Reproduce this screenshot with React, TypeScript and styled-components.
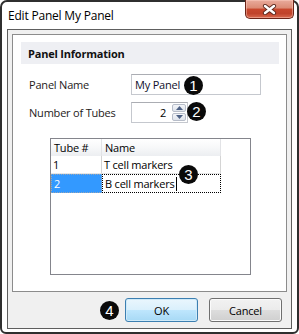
import React from "react";
import styled, { createGlobalStyle } from "styled-components";

const GlobalStyle = createGlobalStyle`
  html, body {
    margin: 0;
    padding: 0;
    background: #ffffff;
  }
  * {
    box-sizing: border-box;
  }
`;

const uiFont = `"Segoe UI", "Open Sans", "Noto Sans", sans-serif`;

const App: React.FC = () => {
  return (
    <>
      <GlobalStyle />
      <Window>
        <TitleBar>Edit Panel My Panel</TitleBar>
        <CloseButton aria-label="Close">
          <svg width="15" height="11" viewBox="0 0 15 11">
            <path d="M3 2 L12 9 M12 2 L3 9" stroke="#5b2a20" strokeWidth="4.2" strokeLinecap="round" />
            <path d="M3 2 L12 9 M12 2 L3 9" stroke="#ffffff" strokeWidth="2.4" strokeLinecap="round" />
          </svg>
        </CloseButton>

        <Client>
          <Panel>
            <SectionHeader>Panel Information</SectionHeader>

            <Form>
              <FieldRow>
                <Label>Panel Name</Label>
                <FieldHolder>
                  <TextInput>My Panel</TextInput>
                  <Badge $left={53} $top={2}>1</Badge>
                </FieldHolder>
              </FieldRow>

              <FieldRow>
                <Label>Number of Tubes</Label>
                <FieldHolder>
                  <Spinner>
                    <SpinValue>2</SpinValue>
                    <SpinButtons>
                      <SpinButton>
                        <svg width="7" height="4" viewBox="0 0 7 4">
                          <path d="M0 4 L3.5 0 L7 4 Z" fill="#4d6185" />
                        </svg>
                      </SpinButton>
                      <SpinButton>
                        <svg width="7" height="4" viewBox="0 0 7 4">
                          <path d="M0 0 L3.5 4 L7 0 Z" fill="#4d6185" />
                        </svg>
                      </SpinButton>
                    </SpinButtons>
                  </Spinner>
                  <Badge $left={56} $top={0}>2</Badge>
                </FieldHolder>
              </FieldRow>
            </Form>

            <Grid>
              <GridRow>
                <HeaderCell $width={50}>Tube #</HeaderCell>
                <HeaderCell $width={118}>Name</HeaderCell>
              </GridRow>
              <GridRow>
                <Cell $width={50}>1</Cell>
                <Cell $width={118}>T cell markers</Cell>
              </GridRow>
              <GridRow>
                <SelectedCell $width={50}>2</SelectedCell>
                <EditCell $width={118}>
                  B cell markers<Caret />
                </EditCell>
              </GridRow>
              <Badge $left={128} $top={26}>3</Badge>
            </Grid>
          </Panel>

          <ButtonRow>
            <InlineBadge>4</InlineBadge>
            <DialogButton $primary>OK</DialogButton>
            <DialogButton>Cancel</DialogButton>
          </ButtonRow>
        </Client>
      </Window>
    </>
  );
};

export default App;

const Window = styled.div`
  position: relative;
  width: 299px;
  height: 334px;
  border: 2px solid #2f2f2f;
  border-radius: 7px 7px 6px 6px;
  background: #ffffff;
  display: flex;
  flex-direction: column;
  font-family: ${uiFont};
  font-size: 11px;
  letter-spacing: -0.2px;
  color: #1a1a1a;
`;

const TitleBar = styled.div`
  height: 27px;
  padding-left: 6px;
  display: flex;
  align-items: center;
  font-size: 12px;
  color: #000000;
`;

const CloseButton = styled.div`
  position: absolute;
  top: -2px;
  right: 3px;
  width: 49px;
  height: 19px;
  border: 1px solid #6b2418;
  border-top: none;
  border-radius: 0 0 5px 5px;
  background: linear-gradient(
    to bottom,
    #e9ab9c 0%,
    #db8a74 45%,
    #c8472d 50%,
    #c0432b 75%,
    #d86a4f 100%
  );
  box-shadow: inset 0 0 0 1px rgba(255, 210, 200, 0.45);
  display: flex;
  align-items: center;
  justify-content: center;
`;

const Client = styled.div`
  margin: 0 5px;
  height: 300px;
  border: 1px solid #5e5e5e;
  background: #f0f0f0;
  padding: 4px 4px 6px 4px;
  display: flex;
  flex-direction: column;
`;

const Panel = styled.div`
  height: 258px;
  border: 1px solid #8c8c8c;
  background: #ffffff;
  padding: 7px 7px 0 8px;
  display: flex;
  flex-direction: column;
`;

const SectionHeader = styled.div`
  height: 22px;
  background: #eeeff3;
  padding-left: 7px;
  display: flex;
  align-items: center;
  font-weight: 700;
  color: #111111;
`;

const Form = styled.div`
  margin-top: 10px;
  padding-left: 8px;
  display: flex;
  flex-direction: column;
  gap: 7px;
`;

const FieldRow = styled.div`
  display: flex;
  align-items: center;
  height: 21px;
`;

const Label = styled.div`
  width: 102px;
  color: #1e1a1a;
`;

const FieldHolder = styled.div`
  position: relative;
  display: flex;
`;

const TextInput = styled.div`
  width: 130px;
  height: 21px;
  border: 1px solid #c5c8ce;
  border-top-color: #abadb3;
  background: #ffffff;
  padding-left: 3px;
  display: flex;
  align-items: center;
  color: #10102a;
`;

const Spinner = styled.div`
  width: 57px;
  height: 21px;
  border: 1px solid #c5c8ce;
  border-top-color: #abadb3;
  background: #ffffff;
  display: flex;
`;

const SpinValue = styled.div`
  flex: 1;
  text-align: right;
  padding-right: 6px;
  line-height: 19px;
  color: #000000;
`;

const SpinButtons = styled.div`
  width: 15px;
  padding: 1px 1px 1px 0;
  display: flex;
  flex-direction: column;
  gap: 1px;
`;

const SpinButton = styled.div`
  flex: 1;
  border: 1px solid #b7bdc9;
  border-radius: 2px;
  background: linear-gradient(to bottom, #f3f5f9, #dfe4ec);
  display: flex;
  align-items: center;
  justify-content: center;
`;

const Badge = styled.div<{ $left: number; $top: number }>`
  position: absolute;
  left: ${(p) => p.$left}px;
  top: ${(p) => p.$top}px;
  width: 19px;
  height: 19px;
  border-radius: 50%;
  background: #0a0a0a;
  color: #ffffff;
  font-family: "Liberation Sans", Arial, sans-serif;
  font-size: 15px;
  letter-spacing: 0;
  line-height: 19px;
  text-align: center;
`;

const Grid = styled.div`
  position: relative;
  margin: 15px 0 0 29px;
  width: 201px;
  height: 137px;
  border: 1px solid #84858c;
  background: #ffffff;
`;

const GridRow = styled.div`
  display: flex;
`;

const HeaderCell = styled.div<{ $width: number }>`
  width: ${(p) => p.$width + 1}px;
  height: 17px;
  padding-left: 3px;
  border-right: 1px solid #e2e3e6;
  background: linear-gradient(to bottom, #ffffff 0%, #f7f8f9 50%, #eceef1 100%);
  display: flex;
  align-items: center;
  color: #000000;
`;

const Cell = styled.div<{ $width: number }>`
  width: ${(p) => p.$width + 1}px;
  height: 18px;
  padding-left: 2px;
  border-right: 1px solid #d4d4d4;
  border-bottom: 1px solid #e6e6e6;
  display: flex;
  align-items: center;
  color: #000000;
`;

const SelectedCell = styled(Cell)`
  background: #3399ff;
  color: #ffffff;
  border: 1px dotted #9aa6b4;
  height: 19px;
`;

const EditCell = styled(Cell)`
  border: 1px dotted #000000;
  height: 19px;
`;

const Caret = styled.span`
  display: inline-block;
  width: 1px;
  height: 14px;
  margin-left: 1px;
  background: #000000;
`;

const ButtonRow = styled.div`
  margin-top: 6px;
  padding-right: 5px;
  display: flex;
  justify-content: flex-end;
  align-items: center;
  gap: 11px;
`;

const InlineBadge = styled.div`
  width: 19px;
  height: 19px;
  margin-right: -5px;
  border-radius: 50%;
  background: #0a0a0a;
  color: #ffffff;
  font-family: "Liberation Sans", Arial, sans-serif;
  font-size: 15px;
  letter-spacing: 0;
  line-height: 19px;
  text-align: center;
`;

const DialogButton = styled.div<{ $primary?: boolean }>`
  width: 73px;
  height: 24px;
  border: 1px solid ${(p) => (p.$primary ? "#3c7fb1" : "#707070")};
  border-radius: 3px;
  background: ${(p) =>
    p.$primary
      ? "linear-gradient(to bottom, #eaf6fd 0%, #d9f0fc 50%, #bee6fd 51%, #a7d9f5 100%)"
      : "linear-gradient(to bottom, #f2f2f2 0%, #ebebeb 50%, #dddddd 51%, #cfcfcf 100%)"};
  box-shadow: inset 0 0 0 1px ${(p) => (p.$primary ? "#cfeaf9" : "#fbfbfb")};
  display: flex;
  align-items: center;
  justify-content: center;
  color: #000000;
`;
